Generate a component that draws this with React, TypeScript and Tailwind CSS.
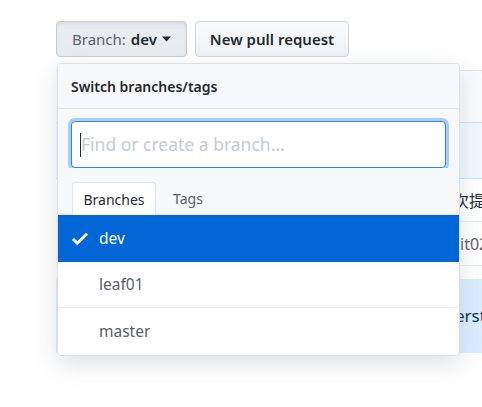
import React from "react";

export default function App() {
  const font = "font-['Noto_Sans','Segoe_UI',sans-serif]";
  return (
    <div className={`relative w-[482px] h-[407px] overflow-hidden bg-white ${font}`}>
      {/* top buttons */}
      <div className="flex gap-[8px] pl-[56px] pt-[21px]">
        <button className="flex h-[36px] w-[131px] items-center rounded-[4px] border border-[#c7ccd1] bg-[#e9ecef] pl-[15px] text-[15px] shadow-[inset_0_2px_3px_rgba(27,31,35,0.08)]">
          <span className="text-[#586069]">Branch:</span>
          <span className="ml-[5px] font-semibold text-[#24292e]">dev</span>
          <svg className="ml-[5px]" width="9" height="6" viewBox="0 0 9 6">
            <path d="M0 0.5h9L4.5 5.5z" fill="#24292e" />
          </svg>
        </button>
        <button className="flex h-[36px] w-[154px] items-center justify-center rounded-[4px] border border-[#d1d5da] bg-gradient-to-b from-[#fafbfc] to-[#eff3f6] text-[15px] font-semibold text-[#24292e]">
          New pull request
        </button>
      </div>

      {/* background content partly hidden */}
      <div className="ml-[56px] mt-[13px] w-[440px]">
        <div className="h-[52px] border-t border-[#e1e4e8] bg-[#fafbfc]" />
        <div className="h-[57px] border-y border-[#c8e1ff] bg-[#f1f8ff]" />
        <div className="flex h-[43px] items-center border-b border-[#eaecef] pl-[397px] text-[16px] text-[#24292e] whitespace-nowrap font-['Noto_Sans_CJK_SC',sans-serif]">
          次提交
        </div>
        <div className="flex h-[43px] items-center pl-[404px] text-[16px] text-[#586069] whitespace-nowrap">
          it02
        </div>
        <div className="h-[14px] border-t border-[#eaecef]" />
        <div className="flex h-[74px] items-center bg-[#dbedff] pl-[399px] text-[17px] text-[#032f62] whitespace-nowrap">
          erst
        </div>
      </div>

      {/* dropdown menu */}
      <div className="absolute left-[57px] top-[63px] w-[403px] overflow-hidden rounded-[4px] border border-[#dcdfe3] bg-white shadow-[0_8px_24px_rgba(149,157,165,0.3)]">
        <div className="flex h-[45px] items-center border-b border-[#e1e4e8] bg-[#f6f8fa] pl-[13px] text-[14px] font-semibold text-[#24292e]">
          Switch branches/tags
        </div>
        <div className="bg-[#f6f8fa] px-[13px] pt-[12px]">
          <div className="flex h-[47px] items-center rounded-[4px] border border-[#2188ff] bg-white pl-[8px] shadow-[0_0_0_3px_rgba(3,102,214,0.3)]">
            <span className="h-[24px] w-[1px] bg-[#24292e]" />
            <span className="text-[17.5px] text-[#c6cbd1]">Find or create a branch...</span>
          </div>
        </div>
        <div className="flex bg-[#f6f8fa] px-[14px] pt-[14px] border-b border-[#e1e4e8]">
          <div className="-mb-[1px] flex h-[33px] w-[84px] items-center justify-center rounded-t-[4px] border border-b-0 border-[#e1e4e8] bg-white text-[14px] text-[#24292e]">
            Branches
          </div>
          <div className="flex h-[32px] w-[64px] items-center justify-center text-[14px] text-[#586069]">
            Tags
          </div>
        </div>
        <div className="flex h-[47px] items-center bg-[#0366d6] pl-[14px] text-[15.5px] text-white">
          <svg width="16" height="14" viewBox="0 3 12 10.5" className="mr-[11px]">
            <path d="M12 5l-8 8-4-4 1.5-1.5L4 10l6.5-6.5L12 5z" fill="white" />
          </svg>
          dev
        </div>
        <div className="flex h-[46px] items-center border-b border-[#eaecef] pl-[41px] text-[15.5px] text-[#586069]">
          leaf01
        </div>
        <div className="flex h-[47px] items-center pl-[41px] text-[15.5px] text-[#586069]">
          master
        </div>
      </div>
    </div>
  );
}
